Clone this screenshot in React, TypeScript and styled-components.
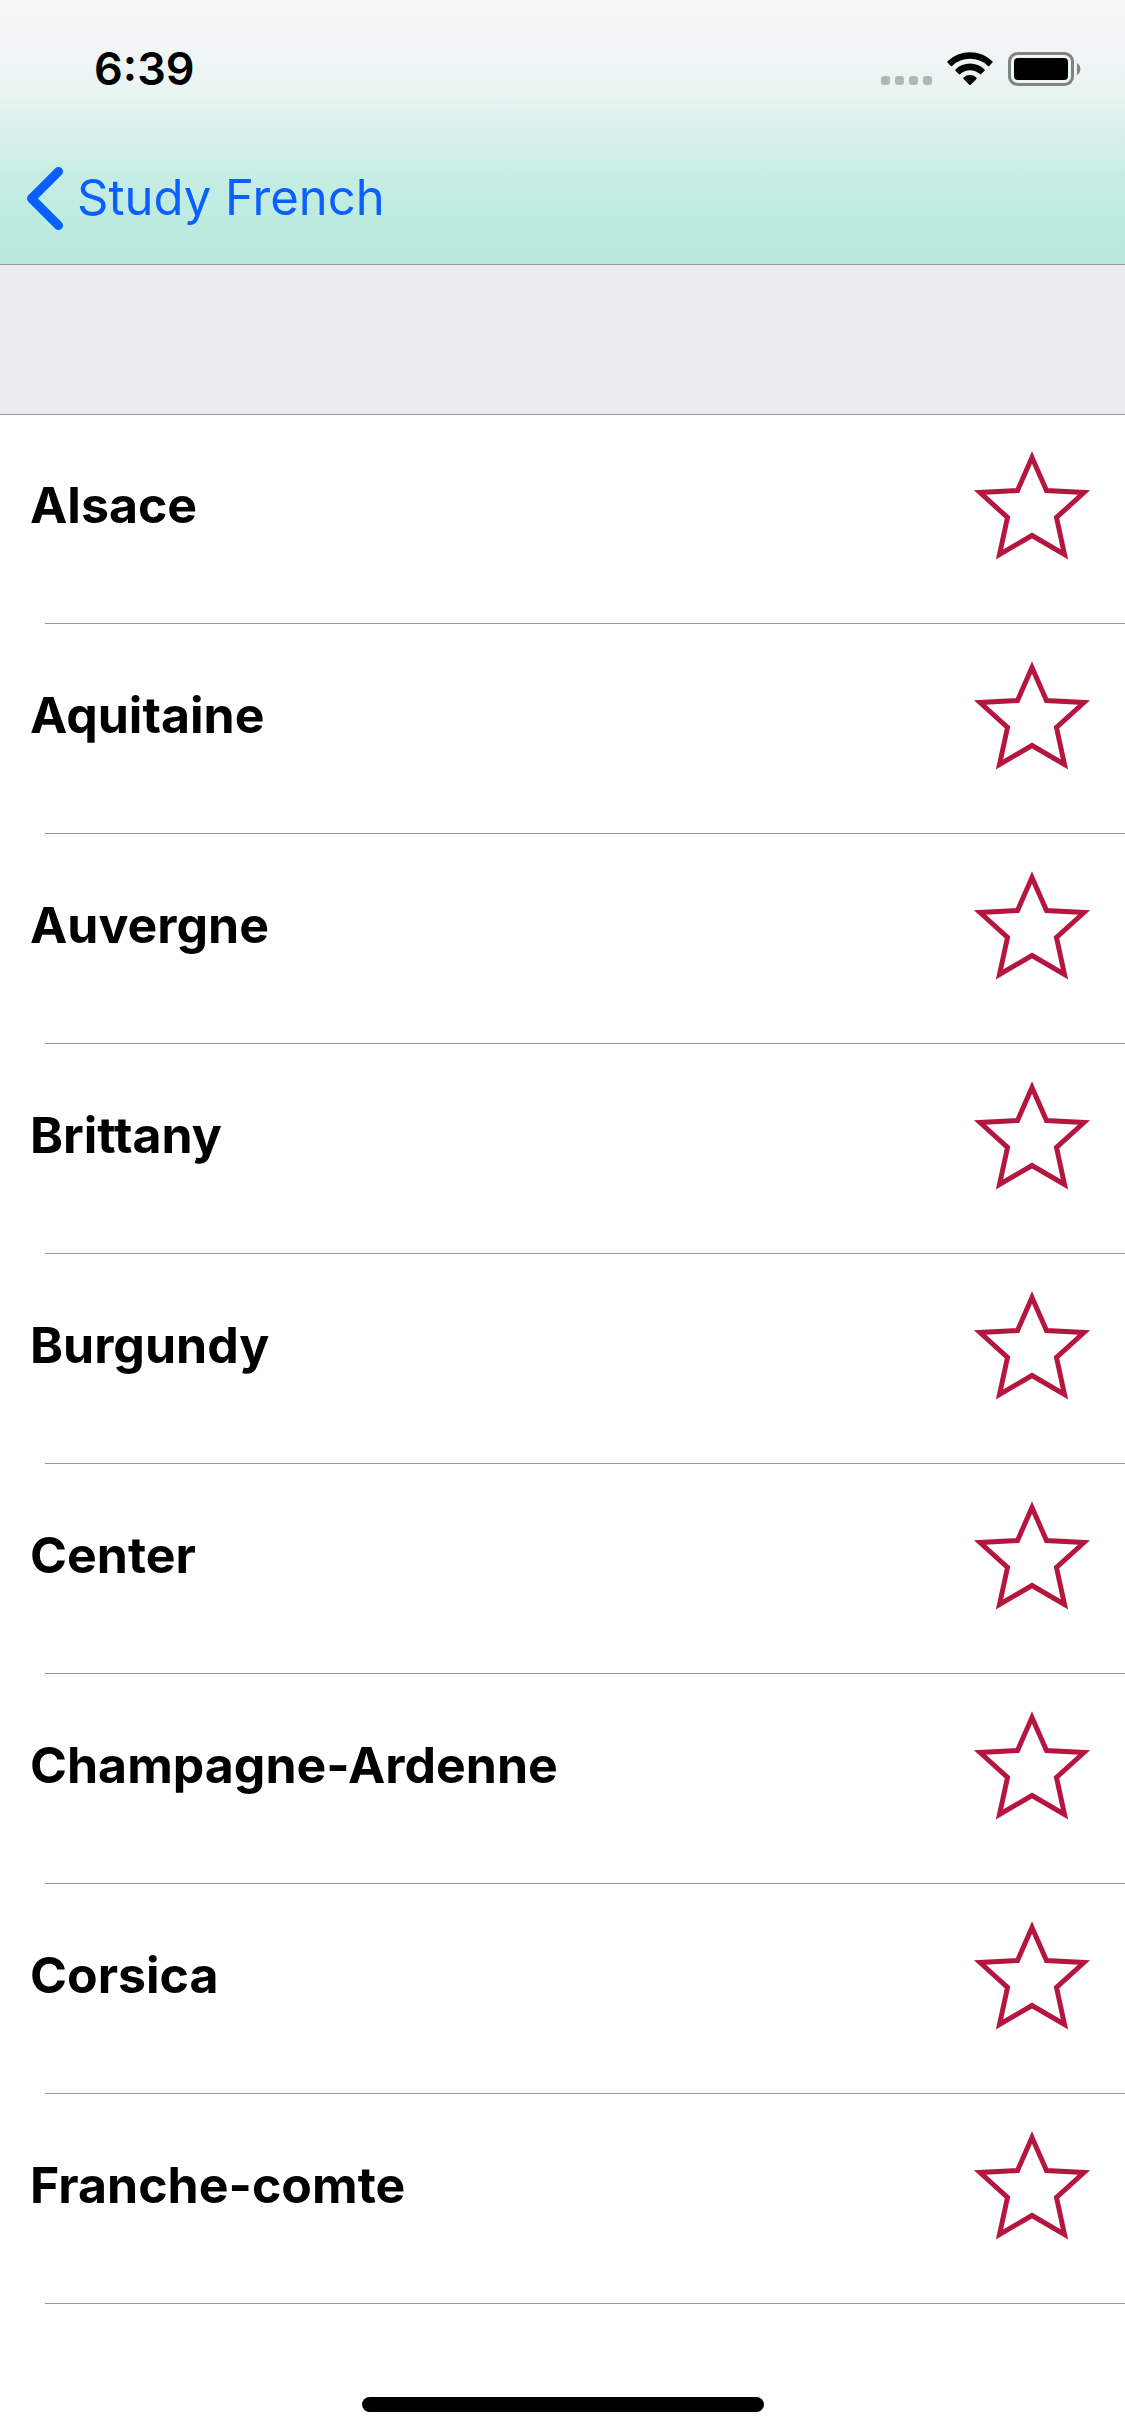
import React, { useState } from "react";
import styled, { createGlobalStyle } from "styled-components";

const GlobalStyle = createGlobalStyle`
  *, *::before, *::after { box-sizing: border-box; }
  body {
    margin: 0;
    background: #fff;
    color: #000;
    font-family: Inter, "Liberation Sans", sans-serif;
  }
`;

const Screen = styled.div`
  display: flex;
  flex-direction: column;
  min-height: 100vh;
`;

const TopBar = styled.header`
  background: linear-gradient(
    to bottom,
    #f6f8f7 0px,
    #f2f5f6 46px,
    #e8f4f1 94px,
    #d6f0e9 138px,
    #c6ede3 176px,
    #beebe0 215px,
    #b9e9dd 264px
  );
  border-bottom: 1px solid #929a9a;
`;

const StatusBar = styled.div`
  display: flex;
  align-items: center;
  justify-content: space-between;
  height: 132px;
  padding: 6px 44px 0 94px;
`;

const Time = styled.time`
  font-size: 45px;
  font-weight: 600;
  line-height: 54px;
`;

const StatusIcons = styled.div`
  display: flex;
  align-items: center;
  gap: 15px;
`;

const NavRow = styled.nav`
  display: flex;
  align-items: center;
  height: 132px;
  padding: 0 26px;
`;

const BackLink = styled.a`
  display: flex;
  align-items: center;
  gap: 12px;
  color: #0a60ff;
  font-size: 49px;
  line-height: 60px;
  text-decoration: none;
`;

const SectionHeader = styled.div`
  height: 149px;
  background: #ebebf1;
`;

const List = styled.ul`
  flex: 1;
  margin: 0;
  padding: 0;
  list-style: none;
  box-shadow: inset 0 1px 0 #97979b;
`;

const Row = styled.li`
  display: flex;
  flex-direction: column;
  height: 210px;
`;

const RowContent = styled.div`
  display: flex;
  flex: 1;
  align-items: center;
  justify-content: space-between;
  padding: 0 33px 24px 30px;
`;

const RegionName = styled.span`
  padding-bottom: 4px;
  font-size: 50px;
  font-weight: 700;
  line-height: 60px;
`;

const StarButton = styled.button`
  display: flex;
  padding: 0;
  border: 0;
  background: none;
  cursor: pointer;
`;

const Separator = styled.div`
  height: 1px;
  margin-left: 45px;
  background: #97979b;
`;

const HomeArea = styled.footer`
  display: flex;
  justify-content: center;
  padding: 0 0 24px;
`;

const HomeIndicator = styled.div`
  width: 402px;
  height: 15px;
  border-radius: 8px;
  background: #000;
`;

const regions = [
  "Alsace",
  "Aquitaine",
  "Auvergne",
  "Brittany",
  "Burgundy",
  "Center",
  "Champagne-Ardenne",
  "Corsica",
  "Franche-comte",
];

const SignalDots = () => (
  <svg width="51" height="34" viewBox="0 0 51 34" fill="#b0b8b6" aria-hidden="true">
    <rect x="0" y="24" width="9" height="9" rx="3" />
    <rect x="14" y="24" width="9" height="9" rx="3" />
    <rect x="28" y="24" width="9" height="9" rx="3" />
    <rect x="42" y="24" width="9" height="9" rx="3" />
  </svg>
);

const WifiIcon = () => (
  <svg width="46" height="34" viewBox="0 0 46 34" aria-hidden="true">
    <path d="M.6 9.2a32.5 32.5 0 0 1 44.8 0q.7.7 0 1.4l-3.2 3.3q-.6.6-1.3 0a26 26 0 0 0-35.8 0q-.7.6-1.3 0L.6 10.600q-.7-.7 0-1.400z" />
    <path d="M8.500 17.400a21 21 0 0 1 29 0q.7.7 0 1.400l-3.300 3.300q-.6.6-1.300 0a14.600 14.600 0 0 0-19.800 0q-.7.6-1.300 0l-3.300-3.300q-.7-.7 0-1.400z" />
    <path d="M16.600 25.400a10 10 0 0 1 12.800 0q.8.7 0 1.500l-5.700 5.800q-.7.6-1.400 0l-5.700-5.800q-.8-.8 0-1.500z" />
  </svg>
);

const BatteryIcon = () => (
  <svg width="73" height="34" viewBox="0 0 73 34" aria-hidden="true">
    <rect x="1.5" y="1.5" width="63" height="31" rx="8" fill="none" stroke="#7f8483" strokeWidth="3" />
    <rect x="6" y="6" width="54" height="22" rx="4" />
    <path d="M69 11a7 7 0 0 1 0 12z" fill="#7f8483" />
  </svg>
);

const BackChevron = () => (
  <svg width="39" height="64" viewBox="0 0 39 64" fill="none" aria-hidden="true">
    <path d="M32.500 5.500L5.500 32.500l27 27" stroke="currentColor" strokeWidth="9" strokeLinecap="round" strokeLinejoin="round" />
  </svg>
);

const StarIcon = ({ filled }: { filled: boolean }) => (
  <svg width="120" height="120" viewBox="0 0 120 120" aria-hidden="true">
    <path
      d="M60 10.500L74.500 43.500L112 45.500L84.500 70.500L92.500 107.500L60 88.500L27.500 107.500L35.500 70.500L8 45.500L45.500 43.500Z"
      fill={filled ? "#b5163f" : "none"}
      stroke="#b5163f"
      strokeWidth="5"
      strokeLinejoin="miter"
    />
  </svg>
);

const RegionRow = ({ name }: { name: string }) => {
  const [starred, setStarred] = useState(false);
  return (
    <Row>
      <RowContent>
        <RegionName>{name}</RegionName>
        <StarButton
          type="button"
          aria-label={`Star ${name}`}
          aria-pressed={starred}
          onClick={() => setStarred(!starred)}
        >
          <StarIcon filled={starred} />
        </StarButton>
      </RowContent>
      <Separator />
    </Row>
  );
};

export default function App() {
  return (
    <>
      <GlobalStyle />
      <Screen>
        <TopBar>
          <StatusBar>
            <Time>6:39</Time>
            <StatusIcons>
              <SignalDots />
              <WifiIcon />
              <BatteryIcon />
            </StatusIcons>
          </StatusBar>
          <NavRow>
            <BackLink href="#study-french">
              <BackChevron />
              Study French
            </BackLink>
          </NavRow>
        </TopBar>
        <SectionHeader />
        <List>
          {regions.map((name) => (
            <RegionRow key={name} name={name} />
          ))}
        </List>
        <HomeArea>
          <HomeIndicator />
        </HomeArea>
      </Screen>
    </>
  );
}
